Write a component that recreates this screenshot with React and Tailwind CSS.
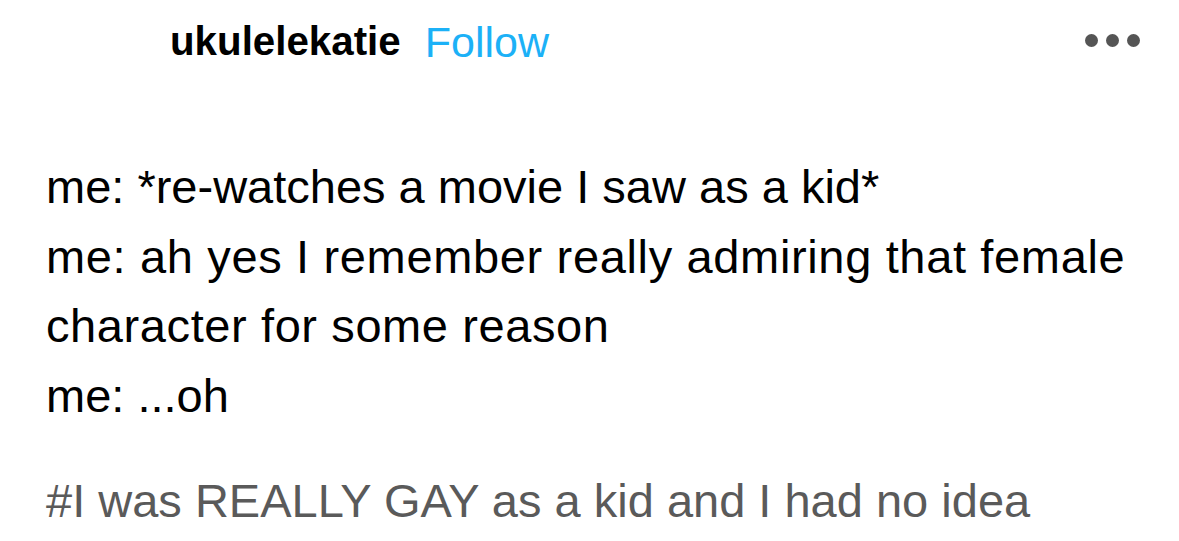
import React from "react";

const App = () => {
  return (
    <div
      className="w-[1179px] h-[541px] overflow-hidden bg-white"
      style={{ fontFamily: '"Liberation Sans", Arial, sans-serif' }}
    >
      <div className="flex items-center h-[84px] pl-[170px] pr-[39px]">
        <span className="text-[40.3px] font-bold text-black">ukulelekatie</span>
        <span className="ml-[24px] text-[43px] text-[#1cb1f7]">Follow</span>
        <div className="ml-auto flex gap-[8px] pb-[4px]">
          <span className="w-[13px] h-[13px] rounded-full bg-[#555]" />
          <span className="w-[13px] h-[13px] rounded-full bg-[#555]" />
          <span className="w-[13px] h-[13px] rounded-full bg-[#555]" />
        </div>
      </div>
      <div className="pl-[46px] pt-[68px] text-[47px] leading-[69.5px] text-black">
        <p>me: *re-watches a movie I saw as a kid*</p>
        <p className="tracking-[0.65px]">me: ah yes I remember really admiring that female</p>
        <p className="tracking-[0.6px]">character for some reason</p>
        <p>me: ...oh</p>
      </div>
      <div className="pl-[46px] pt-[43px] text-[47px] leading-[56px] text-[#5a5a5a] whitespace-nowrap">
        #I was REALLY GAY as a kid and I had no idea
      </div>
    </div>
  );
};

export default App;
